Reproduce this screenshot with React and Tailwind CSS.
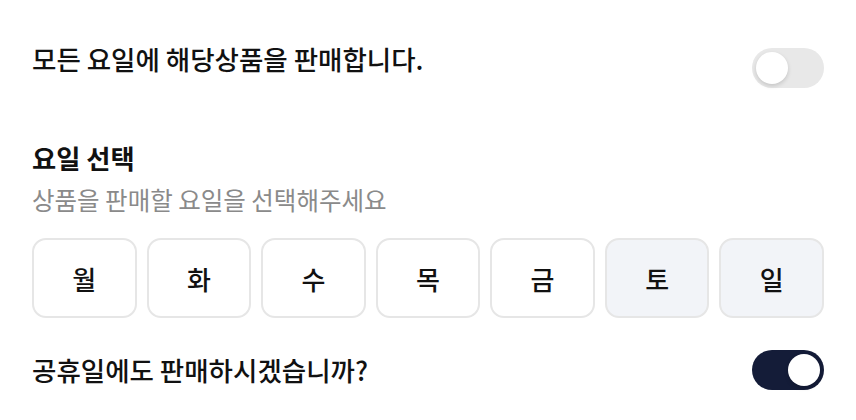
import React from "react";

const days = ["월", "화", "수", "목", "금", "토", "일"];

function Toggle({ on }) {
  return (
    <div
      className={
        "w-[72px] h-[40px] rounded-full p-[4px] flex items-center shrink-0 " +
        (on ? "bg-[#141c38] justify-end" : "bg-[#e8e8e8] justify-start")
      }
    >
      <div className="w-[32px] h-[32px] rounded-full bg-white shadow-[0_2px_4px_rgba(0,0,0,0.15)]" />
    </div>
  );
}

export default function App() {
  return (
    <div
      className="w-[856px] h-[420px] bg-white px-[32px] pt-[48px] text-[#111111]"
      style={{ fontFamily: '"Noto Sans CJK KR", "Noto Sans", sans-serif' }}
    >
      <div className="flex items-start justify-between">
        <div className="text-[26.5px] font-medium leading-[22px]">모든 요일에 해당상품을 판매합니다.</div>
        <Toggle on={false} />
      </div>

      <div className="mt-[54px] text-[26.3px] font-semibold leading-[32px]">요일 선택</div>
      <div className="mt-[10px] text-[24.5px] text-[#8a8a8a] leading-[32px]">상품을 판매할 요일을 선택해주세요</div>

      <div className="mt-[22px] grid grid-cols-7 gap-[10px] w-[792px]">
        {days.map((d, i) => (
          <div
            key={d}
            className={
              "h-[80px] rounded-[14px] border-2 border-[#e6e6e6] flex items-center justify-center text-[26px] font-medium " +
              (i >= 5 ? "bg-[#f2f4f8]" : "bg-white")
            }
          >
            {d}
          </div>
        ))}
      </div>

      <div className="mt-[32px] flex items-center justify-between">
        <div className="text-[26.5px] font-medium leading-[28px]">공휴일에도 판매하시겠습니까?</div>
        <Toggle on={true} />
      </div>
    </div>
  );
}
